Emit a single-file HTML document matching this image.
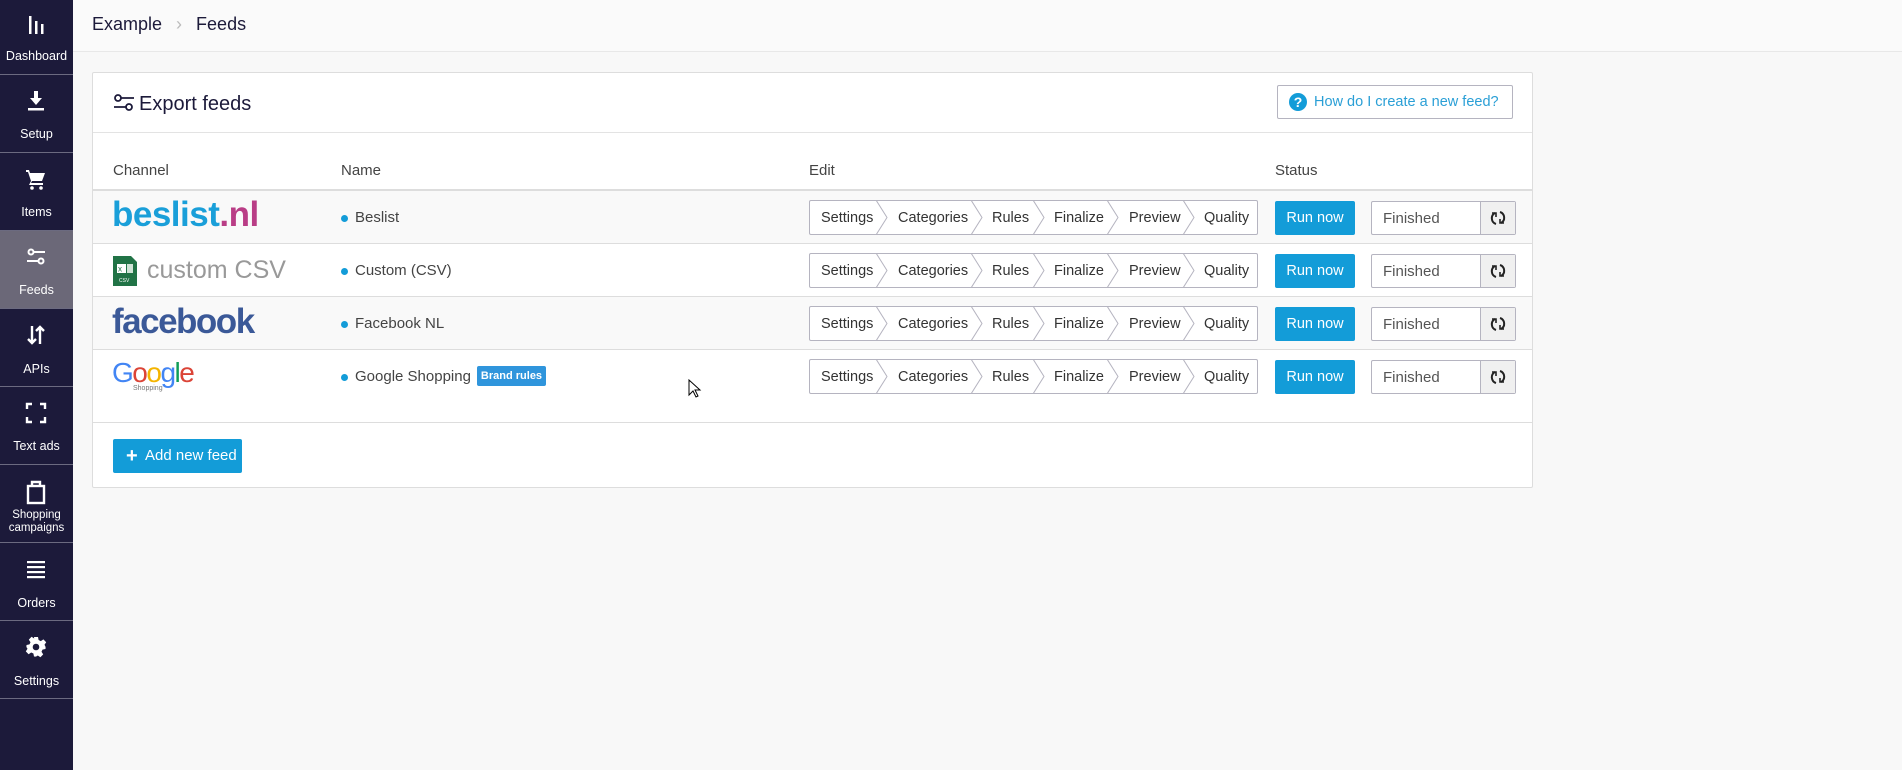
<!DOCTYPE html>
<html><head><meta charset="utf-8"><style>
*{margin:0;padding:0;box-sizing:border-box}
body{width:1902px;height:770px;background:#f8f8f8;font-family:"Liberation Sans",sans-serif;position:relative;overflow:hidden;color:#333}
.sb{position:absolute;left:0;top:0;width:73px;height:770px;background:#1c1a3a}
.it{position:absolute;left:0;width:73px;height:78px;border-bottom:1px solid #6b6a80;color:#fff;text-align:center;font-size:12.5px}
.it .lb{position:absolute;left:0;right:0;top:48px;line-height:13px}
.it svg{position:absolute;left:24px;top:14px}
.hdr{position:absolute;left:73px;top:0;right:0;height:52px;background:#fafafa;border-bottom:1px solid #e8e8e8}
.bc{position:absolute;left:92px;top:14px;font-size:18px;color:#1c1a3a}
.card{position:absolute;left:92px;top:72px;width:1441px;height:416px;background:#fff;border:1px solid #ddd;border-radius:2px}
.a{position:absolute}
.th{position:absolute;top:162px;font-size:15px;color:#444}
.row{position:absolute;left:93px;width:1439px;border-bottom:1px solid #ddd}
.nm{position:absolute;left:355px;font-size:15px;color:#444}
.nm:before{content:"";position:absolute;left:-14px;top:6px;width:7px;height:7px;border-radius:50%;background:#139cd8}
.steps{position:absolute;left:716px;width:449px;height:35px;border:1px solid #b5b4c0;border-radius:2px;background:#fff;font-size:14.5px;color:#333}
.steps span{position:absolute;top:9px}
.steps svg{position:absolute;top:-1px}
.run{position:absolute;left:1182px;width:80px;height:34px;background:#139cd8;color:#fff;font-size:14.5px;text-align:center;line-height:34px;border-radius:2px}
.fin{position:absolute;left:1278px;width:145px;height:34px;border:1px solid #b5b4c0;border-radius:2px;background:#fff;font-size:15px;color:#555}
.fin span{position:absolute;left:11px;top:8px}
.fin i{position:absolute;right:0;top:0;width:35px;height:32px;background:#f0f0f0;border-left:1px solid #b5b4c0}
.fin i svg{position:absolute;left:9px;top:8px}
</style></head><body>
<div class="sb">
 <div class="it" style="top:0;height:75px"><svg width="24" height="24" viewBox="0 0 24 24"><rect x="5" y="2" width="2.5" height="18" fill="#fff"/><rect x="11" y="7" width="2.5" height="13" fill="#fff"/><rect x="17" y="10" width="2.5" height="10" fill="#fff"/></svg><div class="lb" style="top:50px">Dashboard</div></div>
 <div class="it" style="top:75px"><svg width="24" height="24" viewBox="0 0 24 24"><path d="M10 2h4v7h4l-6 7-6-7h4z" fill="#fff"/><rect x="4" y="19" width="16" height="2.5" fill="#fff"/></svg><div class="lb" style="top:53px">Setup</div></div>
 <div class="it" style="top:153px"><svg width="24" height="24" viewBox="0 0 24 24"><path d="M2 3h3l1 3h15l-3 8H8l-1 2h12v2H5l2-4L4 5H2z" fill="#fff"/><circle cx="8" cy="21" r="1.8" fill="#fff"/><circle cx="17" cy="21" r="1.8" fill="#fff"/></svg><div class="lb" style="top:53px">Items</div></div>
 <div class="it" style="top:231px;background:#6b6878"><svg width="24" height="24" viewBox="0 0 24 24" fill="none" stroke="#fff" stroke-width="2"><circle cx="7" cy="7" r="2.5"/><path d="M10 7h11M3 16h11"/><circle cx="17" cy="16" r="2.5"/></svg><div class="lb" style="top:53px">Feeds</div></div>
 <div class="it" style="top:309px"><svg width="24" height="24" viewBox="0 0 24 24" fill="none" stroke="#fff" stroke-width="2.4"><path d="M8 3v17M4 16l4 4 4-4M16 21V4M12 8l4-4 4 4"/></svg><div class="lb" style="top:54px">APIs</div></div>
 <div class="it" style="top:387px"><svg width="24" height="24" viewBox="0 0 24 24" fill="none" stroke="#fff" stroke-width="2.4"><path d="M3 8V3h5M16 3h5v5M21 16v5h-5M8 21H3v-5"/></svg><div class="lb" style="top:53px">Text ads</div></div>
 <div class="it" style="top:465px"><svg width="24" height="26" viewBox="0 0 24 26" fill="none" stroke="#fff" stroke-width="2.4"><rect x="4" y="7" width="16" height="17"/><path d="M8 7V3h8v4"/></svg><div class="lb" style="top:44px;font-size:11.5px">Shopping<br>campaigns</div></div>
 <div class="it" style="top:543px"><svg width="24" height="24" viewBox="0 0 24 24" fill="#fff"><rect x="3" y="4" width="18" height="2.2"/><rect x="3" y="9" width="18" height="2.2"/><rect x="3" y="14" width="18" height="2.2"/><rect x="3" y="19" width="18" height="2.2"/></svg><div class="lb" style="top:54px">Orders</div></div>
 <div class="it" style="top:621px"><svg width="24" height="24" viewBox="0 0 24 24"><path fill="#fff" d="M10 2h4l.6 3 2.2 1.1 2.6-1.7 2.8 2.8-1.7 2.6L21.6 12l-.1 2-3 .6-1 2.2 1.7 2.6-2.8 2.8-2.6-1.7L12 21.6l-2-.1-.6-3-2.2-1-2.6 1.7-2.8-2.8 1.7-2.6L2.4 12l.1-2 3-.6 1-2.2-1.7-2.6 2.8-2.8 2.6 1.7z"/><circle cx="12" cy="12" r="3.3" fill="#1c1a3a"/></svg><div class="lb" style="top:54px">Settings</div></div>
</div>
<div class="hdr"></div>
<div class="bc">Example <span style="color:#bbb;margin:0 9px">&#8250;</span> Feeds</div>

<div class="card">
 <svg class="a" style="left:20px;top:20px" width="22" height="20" viewBox="0 0 22 20" fill="none" stroke="#1c1a3a" stroke-width="1.8"><circle cx="5" cy="5" r="3"/><path d="M8 5h13M1 14h12"/><circle cx="16" cy="14" r="3"/></svg>
 <div class="a" style="left:46px;top:20px;font-size:20px;color:#1c1a3a">Export feeds</div>
 <div class="a" style="left:1184px;top:12px;width:236px;height:34px;border:1px solid #b5b4c0;border-radius:2px;color:#2a9fd6;font-size:14.5px">
  <div class="a" style="left:11px;top:7px;width:18px;height:18px;border-radius:50%;background:#139cd8;color:#fff;font-weight:bold;font-size:14px;text-align:center;line-height:18px">?</div>
  <div class="a" style="left:36px;top:8px">How do I create a new feed?</div></div>
 <div class="a" style="left:0;top:59px;width:1439px;border-top:1px solid #e3e3e3"></div>
 <div class="th" style="left:20px;top:89px">Channel</div>
 <div class="th" style="left:248px;top:89px">Name</div>
 <div class="th" style="left:716px;top:89px">Edit</div>
 <div class="th" style="left:1182px;top:89px">Status</div>
</div>
<div class="a" style="left:93px;top:189px;width:1439px;height:2px;background:#ddd"></div>

<div class="row" style="top:191px;height:53px;background:#f9f9f9"></div>
<div class="row" style="top:244px;height:53px;background:#fff"></div>
<div class="row" style="top:297px;height:53px;background:#f9f9f9"></div>
<div class="row" style="top:350px;height:73px;background:#fff"></div>

<div class="a" style="left:112px;top:196px;font-size:35px;line-height:38px;font-weight:bold;letter-spacing:-0.5px;color:#1a9fd9;white-space:nowrap">beslist<span style="color:#b93d86">.nl</span></div>
<svg class="a" style="left:113px;top:256px" width="24" height="30" viewBox="0 0 24 30"><path d="M0 0h18l6 6v24H0z" fill="#217346"/><rect x="4" y="8" width="9" height="9" fill="#fff"/><text x="5" y="15.5" font-size="8" font-family="Liberation Sans" fill="#217346">x</text><rect x="14" y="8" width="6" height="9" fill="#cfe3d6"/><text x="6" y="26" font-size="5" font-family="Liberation Sans" fill="#fff">CSV</text></svg>
<div class="a" style="left:147px;top:256px;font-size:25px;line-height:28px;color:#999;white-space:nowrap">custom CSV</div>
<div class="a" style="left:112px;top:303px;font-size:35px;line-height:38px;font-weight:bold;letter-spacing:-1.5px;color:#3b5998;white-space:nowrap">facebook</div>
<div class="a" style="left:112px;top:358px;font-size:28px;line-height:30px;letter-spacing:-1.5px;white-space:nowrap"><span style="color:#4285f4">G</span><span style="color:#db4437">o</span><span style="color:#f4b400">o</span><span style="color:#4285f4">g</span><span style="color:#0f9d58">l</span><span style="color:#db4437">e</span></div>
<div class="a" style="left:133px;top:385px;font-size:7px;color:#777">Shopping</div>

<div class="nm" style="top:209px">Beslist</div>
<div class="nm" style="top:262px">Custom (CSV)</div>
<div class="nm" style="top:315px">Facebook NL</div>
<div class="nm" style="top:368px">Google Shopping</div>
<div class="a" style="left:477px;top:366px;width:69px;height:20px;background:#2f95dc;border-radius:2px;color:#fff;font-size:11px;font-weight:bold;text-align:center;line-height:20px">Brand rules</div>
<svg class="a" style="left:688px;top:379px" width="14" height="20" viewBox="0 0 14 20"><path d="M1 1v15l4-4 3 6 2-1-3-6h5z" fill="#fff" stroke="#000"/></svg>

<div id="rows"></div>
<script>
var tops=[200,253,306,359],h='';
var chev=[876,971,1033,1107,1183];
tops.forEach(function(t){
 h+='<div class="steps" style="left:809px;top:'+t+'px">';
 var lbl=[['Settings',11],['Categories',88],['Rules',182],['Finalize',244],['Preview',319],['Quality',394]];
 lbl.forEach(function(l){h+='<span style="left:'+l[1]+'px">'+l[0]+'</span>';});
 chev.forEach(function(c){h+='<svg style="left:'+(c-810)+'px" width="13" height="35" viewBox="0 0 13 35"><path d="M0 0L11 17.5 0 35" fill="none" stroke="#b5b4c0"/></svg>';});
 h+='</div><div class="run" style="left:1275px;top:'+(t+1)+'px">Run now</div>';
 h+='<div class="fin" style="left:1371px;top:'+(t+1)+'px;width:145px"><span>Finished</span><i><svg width="16" height="16" viewBox="0 0 16 16" fill="none" stroke="#222" stroke-width="2"><path d="M5 3A6 6 0 0 0 6 14"/><path d="M11 13A6 6 0 0 0 10 2"/><path d="M2 3h4v4M14 13h-4v-4" stroke-width="1.6"/></svg></i></div>';
});
document.getElementById('rows').innerHTML=h;
</script>
<div class="a" style="left:113px;top:439px;width:129px;height:34px;background:#139cd8;border-radius:2px;color:#fff;font-size:15px;line-height:34px"><span style="position:absolute;left:13px;top:0;font-weight:bold;font-size:20px">+</span><span style="position:absolute;left:32px">Add new feed</span></div>
</body></html>
